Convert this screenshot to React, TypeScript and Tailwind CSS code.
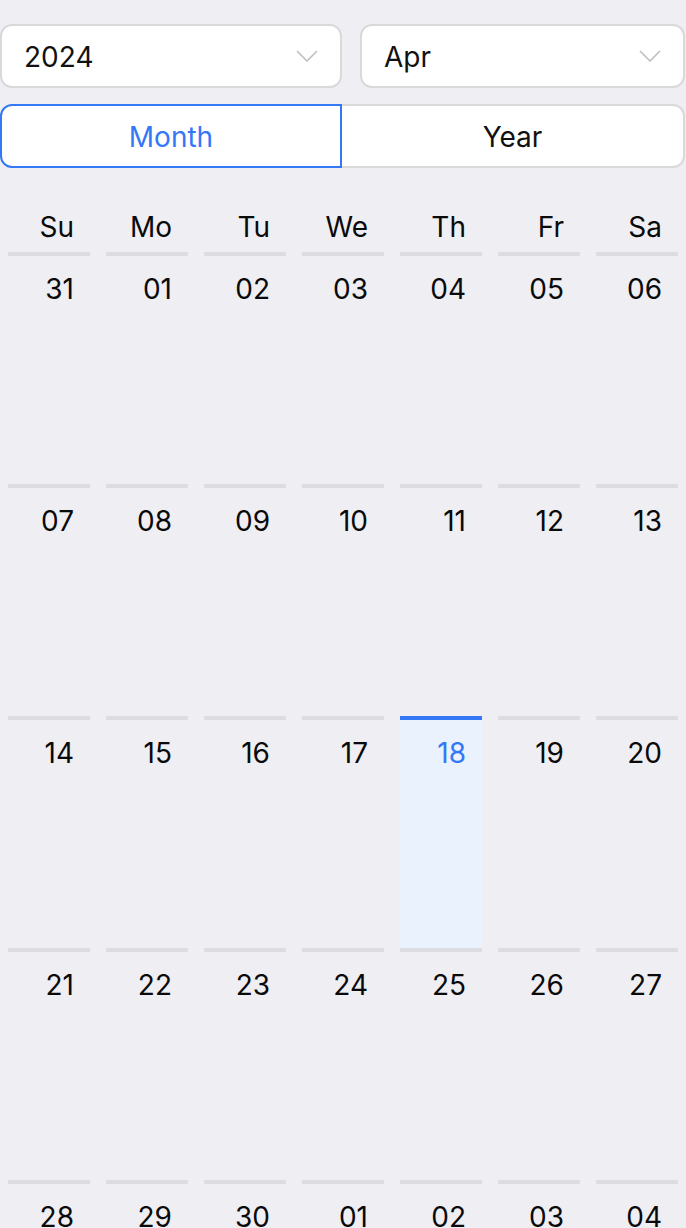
const weekDays = ["Su", "Mo", "Tu", "We", "Th", "Fr", "Sa"];

const weeks = [
  ["31", "01", "02", "03", "04", "05", "06"],
  ["07", "08", "09", "10", "11", "12", "13"],
  ["14", "15", "16", "17", "18", "19", "20"],
  ["21", "22", "23", "24", "25", "26", "27"],
  ["28", "29", "30", "01", "02", "03", "04"],
];

const Chevron = () => (
  <svg width="22" height="12" viewBox="0 0 22 12" fill="none">
    <path d="M1 1 L11 11 L21 1" stroke="#bfbfbf" strokeWidth="1.6" />
  </svg>
);

const Select = ({ value, className }: { value: string; className: string }) => (
  <div
    className={`h-16 flex items-center justify-between rounded-xl border-2 border-[#d9d9d9] bg-white pl-[22px] pr-[22px] ${className}`}
  >
    <span className="pt-[2px] text-[28px] text-[#111]">{value}</span>
    <Chevron />
  </div>
);

export default function App() {
  return (
    <div
      className="min-h-screen bg-[#efeef3] text-[#0a0a0a]"
      style={{ fontFamily: "Inter, 'Liberation Sans', sans-serif" }}
    >
      {/* HEADER */}
      <div className="pt-6 pb-6">
        <div className="flex gap-[18px]">
          <Select value="2024" className="w-[342px]" />
          <Select value="Apr" className="flex-1 mr-[1px]" />
        </div>
        <div className="mt-4 flex h-16 mr-[1px]">
          <div className="w-[342px] flex items-center justify-center rounded-l-xl border-2 border-[#3478f6] bg-white pt-[2px] text-[28px] text-[#3478f6]">
            Month
          </div>
          <div className="flex-1 flex items-center justify-center rounded-r-xl border-2 border-l-0 border-[#d9d9d9] bg-white pt-[2px] text-[28px] text-[#111]">
            Year
          </div>
        </div>
      </div>

      {/* WEEK HEADER */}
      <div className="grid grid-cols-7 pt-[17px]">
        {weekDays.map((d) => (
          <div key={d} className="pr-6 pb-[7px] text-right text-[28px] leading-[36px]">
            {d}
          </div>
        ))}
      </div>

      {/* DAYS */}
      {weeks.map((week, wi) => (
        <div key={wi} className="grid grid-cols-7">
          {week.map((day, di) => {
            const today = wi === 2 && di === 4;
            return (
              <div
                key={di}
                className={`mx-2 border-t-4 pt-[9px] pr-4 text-right ${
                  today ? "border-[#3478f6] bg-[#e9f2fd] text-[#3478f6]" : "border-[#dddce1]"
                }`}
              >
                <div className="text-[28px] leading-[48px]">{day}</div>
                <div className="h-[171px]" />
              </div>
            );
          })}
        </div>
      ))}
    </div>
  );
}
